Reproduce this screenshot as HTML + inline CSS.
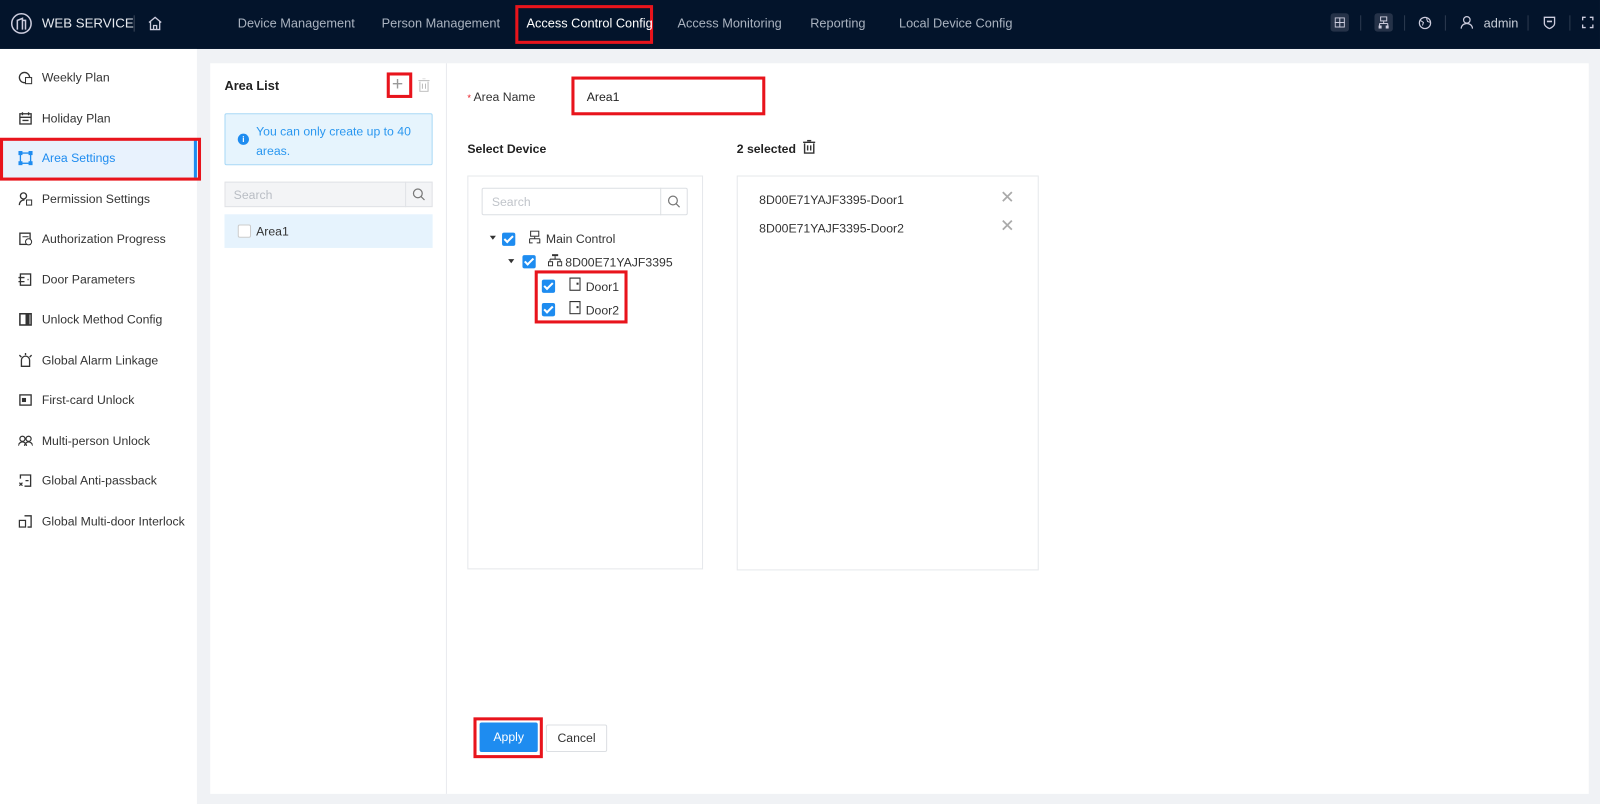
<!DOCTYPE html>
<html><head><meta charset="utf-8"><style>
*{box-sizing:border-box;margin:0;padding:0}
body{width:1600px;height:804px;overflow:hidden;background:#f0f2f5;font-family:"Liberation Sans",sans-serif;font-size:12px;color:#333;position:relative}
#w{position:absolute;left:0;top:0;width:1568px;height:788px;transform:scale(1.0204);transform-origin:0 0}
.a{position:absolute}
.hdr{left:0;top:0;width:1568px;height:48px;background:#03142b}
.nav{color:#aab3c0;font-size:12.5px;top:16px}
.red{border:3px solid #e8141c}
.side{left:0;top:48px;width:193px;height:740px;background:#fff}
.si{left:18px;height:16px;display:flex;align-items:center;font-size:12px;color:#333}
.si svg{width:14px;height:14px;margin-right:9px}
.cb{width:13px;height:13px;background:#1e8cf0;border-radius:2px}
.cb:after{content:"";position:absolute;left:4px;top:1px;width:3px;height:7px;border:solid #fff;border-width:0 2px 2px 0;transform:rotate(45deg)}
.sep{top:15px;width:1px;height:15px;background:#2c3a4f}
</style></head><body><div id="w">
<div class="a hdr"></div>
<svg class="a" style="left:10px;top:12px" width="22" height="22" viewBox="0 0 22 22"><circle cx="11" cy="11" r="9.5" fill="none" stroke="#ccd" stroke-width="1.5"/><path d="M7 17V8l5-2v11M12 8h3v9" fill="none" stroke="#ccd" stroke-width="1.5"/></svg>
<div class="a" style="left:41px;top:15px;color:#e6e9ee;font-size:13px">WEB SERVICE</div>
<div class="a" style="left:131px;top:15px;width:1px;height:16px;background:#3a4658"></div>
<svg class="a" style="left:144px;top:15px" width="16" height="16" viewBox="0 0 16 16"><path d="M2 7L8 2l6 5M3.5 6v8h9V6M6.5 14v-4h3v4" fill="none" stroke="#ccd" stroke-width="1.3"/></svg>
<div class="a nav" style="left:233px">Device Management</div>
<div class="a nav" style="left:374px">Person Management</div>
<div class="a red" style="left:505px;top:5px;width:135px;height:38px"></div>
<div class="a nav" style="left:516px;color:#fff">Access Control Config</div>
<div class="a nav" style="left:664px">Access Monitoring</div>
<div class="a nav" style="left:794px">Reporting</div>
<div class="a nav" style="left:881px">Local Device Config</div>
<div class="a" style="left:1304px;top:13px;width:18px;height:18px;background:#253248;border-radius:3px"></div>
<svg class="a" style="left:1308px;top:17px" width="10" height="10"><rect x=".5" y=".5" width="9" height="9" fill="none" stroke="#ccd"/><path d="M5 0v10M0 5h10" stroke="#ccd"/></svg>
<div class="a" style="left:1347px;top:13px;width:18px;height:18px;background:#253248;border-radius:3px"></div>
<svg class="a" style="left:1351px;top:16px" width="10" height="12"><rect x="2" y=".5" width="6" height="4" fill="none" stroke="#ccd"/><path d="M5 5v2M1 7h8M1 7v2M9 7v2" stroke="#ccd" fill="none"/><rect x="0" y="9" width="3" height="3" fill="#ccd"/><rect x="7" y="9" width="3" height="3" fill="#ccd"/></svg>
<div class="a sep" style="left:1333px"></div>
<div class="a sep" style="left:1376px"></div>
<div class="a sep" style="left:1416px"></div>
<div class="a sep" style="left:1497px"></div>
<div class="a sep" style="left:1538px"></div>
<svg class="a" style="left:1390px;top:16px" width="13" height="13"><circle cx="6.5" cy="6.5" r="5.5" fill="none" stroke="#ccd" stroke-width="1.2"/><path d="M2 4l3 2-1 3M8 2l1 3 3 1" fill="none" stroke="#ccd"/></svg>
<svg class="a" style="left:1431px;top:15px" width="13" height="14"><circle cx="6.5" cy="4.5" r="3.2" fill="none" stroke="#ccd" stroke-width="1.2"/><path d="M1 13c0-3 2.5-5 5.5-5s5.5 2 5.5 5" fill="none" stroke="#ccd" stroke-width="1.2"/></svg>
<div class="a" style="left:1454px;top:16px;color:#c8ced8;font-size:12.5px">admin</div>
<svg class="a" style="left:1512px;top:15px" width="13" height="14"><path d="M1.5 2h10v6c0 3-5 5-5 5s-5-2-5-5z" fill="none" stroke="#ccd" stroke-width="1.3"/><path d="M4 6h5" stroke="#ccd" stroke-width="1.5"/></svg>
<svg class="a" style="left:1550px;top:16px" width="12" height="12"><path d="M1 4V1h3M8 1h3v3M11 8v3H8M4 11H1V8" fill="none" stroke="#ccd" stroke-width="1.3"/></svg>

<div class="a side"></div>
<div class="a" style="left:0;top:137px;width:193px;height:37px;background:#e8f2fd"></div>
<div class="a" style="left:190px;top:137px;width:3px;height:37px;background:#1e8cf0"></div>
<div class="a red" style="left:0;top:135px;width:197px;height:42px"></div>
<div class="a si" style="top:68px"><svg viewBox="0 0 14 14"><circle cx="6" cy="7" r="5" fill="none" stroke="#333" stroke-width="1.3"/><rect x="7" y="7" width="6" height="6" fill="#fff" stroke="#333"/></svg>Weekly Plan</div>
<div class="a si" style="top:108px"><svg viewBox="0 0 14 14"><rect x="1.5" y="2.5" width="11" height="10" fill="none" stroke="#333" stroke-width="1.3"/><path d="M1.5 6h11M4 1v3M10 1v3M4 9h6" stroke="#333" stroke-width="1.3"/></svg>Holiday Plan</div>
<div class="a si" style="top:147px;color:#1e8cf0"><svg viewBox="0 0 14 14"><rect x="2" y="2" width="10" height="10" fill="none" stroke="#1e8cf0" stroke-width="1.3"/><rect x="0" y="0" width="4" height="4" fill="#1e8cf0"/><rect x="10" y="0" width="4" height="4" fill="#1e8cf0"/><rect x="0" y="10" width="4" height="4" fill="#1e8cf0"/><rect x="10" y="10" width="4" height="4" fill="#1e8cf0"/></svg>Area Settings</div>
<div class="a si" style="top:187px"><svg viewBox="0 0 14 14"><circle cx="5" cy="4" r="3" fill="none" stroke="#333" stroke-width="1.3"/><path d="M1 13c0-3 2-5 5-5" fill="none" stroke="#333" stroke-width="1.3"/><rect x="8" y="8" width="5" height="5" fill="none" stroke="#333"/></svg>Permission Settings</div>
<div class="a si" style="top:226px"><svg viewBox="0 0 14 14"><rect x="1.5" y="1.5" width="10" height="11" fill="none" stroke="#333" stroke-width="1.3"/><path d="M4 5h6" stroke="#333"/><circle cx="10" cy="10" r="3" fill="#fff" stroke="#333"/></svg>Authorization Progress</div>
<div class="a si" style="top:266px"><svg viewBox="0 0 14 14"><rect x="2" y="1.5" width="10" height="11" fill="none" stroke="#333" stroke-width="1.3"/><path d="M0 5h6M0 9h6M9 7h1" stroke="#333" stroke-width="1.3"/></svg>Door Parameters</div>
<div class="a si" style="top:305px"><svg viewBox="0 0 14 14"><rect x="1.5" y="1.5" width="11" height="11" fill="none" stroke="#333" stroke-width="1.5"/><rect x="7" y="2" width="4" height="10" fill="#333"/></svg>Unlock Method Config</div>
<div class="a si" style="top:345px"><svg viewBox="0 0 14 14"><path d="M3 13V7a4 4 0 018 0v6zM1 2l2 2M13 2l-2 2M7 0v2" fill="none" stroke="#333" stroke-width="1.3"/></svg>Global Alarm Linkage</div>
<div class="a si" style="top:384px"><svg viewBox="0 0 14 14"><rect x="1.5" y="2" width="11" height="10" fill="none" stroke="#333" stroke-width="1.3"/><rect x="3.5" y="5" width="4" height="4" fill="#333"/></svg>First-card Unlock</div>
<div class="a si" style="top:424px"><svg viewBox="0 0 14 14"><circle cx="4" cy="5" r="2.5" fill="none" stroke="#333" stroke-width="1.2"/><circle cx="10" cy="5" r="2.5" fill="none" stroke="#333" stroke-width="1.2"/><path d="M0 12c0-2 2-4 4-4s4 2 4 4M6 12c0-2 2-4 4-4s4 2 4 4" fill="none" stroke="#333" stroke-width="1.2"/></svg>Multi-person Unlock</div>
<div class="a si" style="top:463px"><svg viewBox="0 0 14 14"><path d="M2 5V1.5h10v11H6" fill="none" stroke="#333" stroke-width="1.3"/><path d="M1 9l3 3M4 9l-3 3M7 7h3" stroke="#333" stroke-width="1.2"/></svg>Global Anti-passback</div>
<div class="a si" style="top:503px"><svg viewBox="0 0 14 14"><path d="M6 1.5h6.5v11H9" fill="none" stroke="#333" stroke-width="1.3"/><rect x="1" y="6" width="6" height="6.5" fill="none" stroke="#333" stroke-width="1.2"/></svg>Global Multi-door Interlock</div>

<div class="a" style="left:206px;top:62px;width:1351px;height:716px;background:#fff"></div>
<div class="a" style="left:437px;top:62px;width:1px;height:716px;background:#e8eaee"></div>
<div class="a" style="left:220px;top:77px;font-weight:bold;font-size:12.5px;color:#222">Area List</div>
<div class="a red" style="left:379px;top:71px;width:25px;height:25px"></div>
<div class="a" style="left:384px;top:71px;font-size:19px;color:#999;line-height:24px">+</div>
<svg class="a" style="left:410px;top:77px" width="11" height="13"><path d="M0 2h11M4 0h3M1.5 3v9.5h8V3M4 5v5M7 5v5" fill="none" stroke="#bbb"/></svg>
<div class="a" style="left:220px;top:111px;width:204px;height:51px;background:#e6f4fd;border:1px solid #a8d8f6;border-radius:2px"></div>
<div class="a" style="left:233px;top:131px;width:11px;height:11px;border-radius:50%;background:#1e8cf0;color:#fff;font-size:8px;text-align:center;line-height:11px;font-weight:bold">i</div>
<div class="a" style="left:251px;top:120px;color:#2a97f0;font-size:12px;line-height:19px">You can only create up to 40<br>areas.</div>
<div class="a" style="left:220px;top:178px;width:204px;height:25px;background:#f3f4f6;border:1px solid #e0e2e6"></div>
<div class="a" style="left:397px;top:178px;width:1px;height:25px;background:#e0e2e6"></div>
<div class="a" style="left:229px;top:184px;color:#b9bdc4">Search</div>
<svg class="a" style="left:404px;top:184px" width="13" height="13"><circle cx="5.5" cy="5.5" r="4.3" fill="none" stroke="#777" stroke-width="1.2"/><path d="M8.5 8.5L12 12" stroke="#777" stroke-width="1.2"/></svg>
<div class="a" style="left:220px;top:210px;width:204px;height:33px;background:#e6f3fd"></div>
<div class="a" style="left:233px;top:220px;width:13px;height:13px;border:1px solid #ccc;background:#fff;border-radius:2px"></div>
<div class="a" style="left:251px;top:220px;color:#333">Area1</div>

<div class="a" style="left:458px;top:88px;color:#333"><span style="color:#e8141c;font-size:9px">* </span>Area Name</div>
<div class="a red" style="left:560px;top:75px;width:190px;height:38px"></div>
<div class="a" style="left:575px;top:88px;color:#222">Area1</div>
<div class="a" style="left:458px;top:139px;font-weight:bold;color:#222">Select Device</div>
<div class="a" style="left:722px;top:139px;font-weight:bold;color:#222">2 selected</div>
<svg class="a" style="left:787px;top:137px" width="12" height="14"><path d="M0 2.5h12M4 .8h4M1.5 3.5v9.5h9V3.5M4.5 5.5v5M7.5 5.5v5" fill="none" stroke="#333" stroke-width="1.4"/></svg>
<div class="a" style="left:458px;top:172px;width:231px;height:386px;border:1px solid #e6e8eb"></div>
<div class="a" style="left:472px;top:184px;width:202px;height:27px;border:1px solid #dcdfe3;border-radius:2px"></div>
<div class="a" style="left:647px;top:184px;width:1px;height:27px;background:#dcdfe3"></div>
<div class="a" style="left:482px;top:191px;color:#c0c4ca">Search</div>
<svg class="a" style="left:654px;top:191px" width="13" height="13"><circle cx="5.5" cy="5.5" r="4.3" fill="none" stroke="#777" stroke-width="1.2"/><path d="M8.5 8.5L12 12" stroke="#777" stroke-width="1.2"/></svg>
<div class="a" style="left:480px;top:231px;width:0;height:0;border:3.5px solid transparent;border-top:4px solid #333"></div>
<div class="a cb" style="left:492px;top:228px"></div>
<svg class="a" style="left:518px;top:226px" width="12" height="13"><rect x="2" y=".5" width="8" height="5" fill="none" stroke="#333"/><path d="M6 6v2M1 8h10M1 8v4h3M11 8v4H8" fill="none" stroke="#333"/></svg>
<div class="a" style="left:535px;top:227px;color:#333">Main Control</div>
<div class="a" style="left:498px;top:254px;width:0;height:0;border:3.5px solid transparent;border-top:4px solid #333"></div>
<div class="a cb" style="left:512px;top:250px"></div>
<svg class="a" style="left:537px;top:249px" width="14" height="12"><rect x="4" y="0" width="6" height="2" fill="#333"/><path d="M7 2v3M2 5h10M2 5v2M12 5v2" stroke="#333" fill="none"/><rect x=".5" y="7.5" width="4" height="4" fill="none" stroke="#333"/><rect x="9.5" y="7.5" width="4" height="4" fill="none" stroke="#333"/></svg>
<div class="a" style="left:554px;top:250px;color:#333">8D00E71YAJF3395</div>
<div class="a red" style="left:524px;top:265px;width:91px;height:52px"></div>
<div class="a cb" style="left:531px;top:274px"></div>
<svg class="a" style="left:558px;top:272px" width="11" height="13"><rect x=".5" y=".5" width="10" height="12" fill="none" stroke="#333" stroke-width="1.2"/><rect x="7" y="5" width="2" height="2" fill="#333"/></svg>
<div class="a" style="left:574px;top:274px;color:#333">Door1</div>
<div class="a cb" style="left:531px;top:297px"></div>
<svg class="a" style="left:558px;top:295px" width="11" height="13"><rect x=".5" y=".5" width="10" height="12" fill="none" stroke="#333" stroke-width="1.2"/><rect x="7" y="5" width="2" height="2" fill="#333"/></svg>
<div class="a" style="left:574px;top:297px;color:#333">Door2</div>

<div class="a" style="left:722px;top:172px;width:296px;height:387px;border:1px solid #e6e8eb"></div>
<div class="a" style="left:744px;top:189px;color:#333">8D00E71YAJF3395-Door1</div>
<div class="a" style="left:744px;top:217px;color:#333">8D00E71YAJF3395-Door2</div>
<div class="a" style="left:980px;top:184px;color:#aaa;font-size:17px">✕</div>
<div class="a" style="left:980px;top:212px;color:#aaa;font-size:17px">✕</div>

<div class="a red" style="left:464px;top:703px;width:68px;height:40px"></div>
<div class="a" style="left:470px;top:708px;width:57px;height:29px;background:#1e8cf0;border-radius:2px;color:#fff;text-align:center;line-height:29px">Apply</div>
<div class="a" style="left:535px;top:710px;width:60px;height:27px;border:1px solid #dcdfe3;border-radius:2px;color:#333;text-align:center;line-height:25px">Cancel</div>
</div></body></html>
